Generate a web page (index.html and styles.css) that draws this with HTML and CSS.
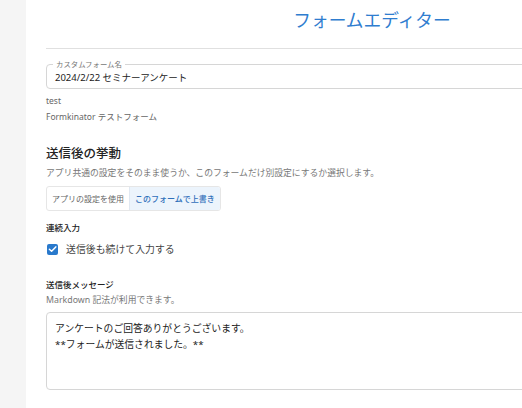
FILE: index.html
```html
<!DOCTYPE html>
<html lang="ja">
<head>
<meta charset="utf-8">
<link rel="stylesheet" href="styles.css">
</head>
<body>
<div class="app">
  <aside class="sidebar"></aside>
  <main class="main">
    <h1 class="title">フォームエディター</h1>
    <hr class="rule">
    <div class="field">
      <span class="field-label">カスタムフォーム名</span>
      <div class="field-value">2024/2/22 セミナーアンケート</div>
    </div>
    <div class="meta">test</div>
    <div class="meta meta2">Formkinator テストフォーム</div>

    <h2 class="section">送信後の挙動</h2>
    <p class="hint">アプリ共通の設定をそのまま使うか、このフォームだけ別設定にするか選択します。</p>
    <div class="toggle">
      <span class="toggle-btn">アプリの設定を使用</span>
      <span class="toggle-btn active">このフォームで上書き</span>
    </div>

    <div class="sub">連続入力</div>
    <label class="check">
      <span class="box"><svg viewBox="0 0 12 12" width="12" height="12"><path d="M2.6 6.2 L5 8.5 L9.6 3.7" fill="none" stroke="#fff" stroke-width="1.6" stroke-linecap="round" stroke-linejoin="round"/></svg></span>
      <span class="check-text">送信後も続けて入力する</span>
    </label>

    <div class="sub sub2">送信後メッセージ</div>
    <p class="hint hint2">Markdown 記法が利用できます。</p>
    <div class="textarea">アンケートのご回答ありがとうございます。<br>**フォームが送信されました。**</div>
  </main>
</div>
</body>
</html>
```
FILE: styles.css
```css
html, body {
  margin: 0;
  padding: 0;
  background: #fff;
  overflow: hidden;
}
body {
  width: 522px;
  height: 408px;
  font-family: "Noto Sans", "Noto Sans CJK JP", sans-serif;
  color: #333;
}
.app {
  display: flex;
  height: 408px;
}
.sidebar {
  flex: none;
  width: 26px;
  background: #f5f5f5;
}
.main {
  flex: none;
  width: 652px;
  padding-left: 20px;
  display: flex;
  flex-direction: column;
}
.title {
  margin: 7px 0 0;
  height: 24px;
  line-height: 24px;
  font-size: 17.7px;
  font-weight: 400;
  color: #2f7dcf;
  text-align: center;
  font-family: "Noto Sans CJK JP", sans-serif;
}
.rule {
  margin: 17px 0 0;
  border: 0;
  border-top: 1px solid #e0e0e0;
  height: 0;
}
.field {
  position: relative;
  margin-top: 15px;
  height: 23px;
  border: 1px solid #d6d6d6;
  border-radius: 4px;
  display: flex;
  align-items: center;
  padding: 0 8px;
}
.field-label {
  position: absolute;
  left: 6px;
  top: -6px;
  padding: 0 3px;
  background: #fff;
  font-size: 7.4px;
  line-height: 10px;
  color: #777;
}
.field-value {
  font-size: 9.5px;
  line-height: 14px;
  padding-top: 2px;
  color: #222;
}
.meta {
  margin-top: 6px;
  font-size: 8.5px;
  line-height: 12px;
  color: #666;
}
.meta2 {
  margin-top: 4px;
}
.section {
  margin: 22px 0 0;
  font-size: 12.5px;
  line-height: 18px;
  font-weight: 500;
  color: #222;
}
.hint {
  margin: 4px 0 0;
  font-size: 8.8px;
  line-height: 12px;
  color: #777;
}
.toggle {
  display: flex;
  margin-top: 7px;
  height: 23px;
  width: fit-content;
  border: 1px solid #e6e6e6;
  border-radius: 3px;
  overflow: hidden;
}
.toggle-btn {
  display: flex;
  align-items: center;
  padding: 0 5px;
  font-size: 8px;
  color: #666;
}
.toggle-btn.active {
  background: #ecf4fc;
  color: #2f6fba;
  border-left: 1px solid #e0e8f2;
  font-weight: 500;
}
.sub {
  margin-top: 11px;
  font-size: 8.5px;
  line-height: 12px;
  font-weight: 500;
  color: #222;
}
.check {
  display: flex;
  align-items: center;
  margin-top: 8px;
  height: 14px;
}
.box {
  width: 11px;
  height: 11px;
  margin-left: 1px;
  border-radius: 2px;
  background: #2979cc;
  display: flex;
  align-items: center;
  justify-content: center;
}
.check-text {
  margin-left: 8px;
  font-size: 9.9px;
  line-height: 14px;
  color: #444;
}
.sub2 {
  margin-top: 23px;
}
.hint2 {
  margin-top: 3px;
  font-size: 8.8px;
}
.textarea {
  margin-top: 6px;
  height: 60px;
  padding: 8px 8px;
  border: 1px solid #d6d6d6;
  border-radius: 4px;
  font-size: 9.8px;
  line-height: 16px;
  color: #222;
}
```
